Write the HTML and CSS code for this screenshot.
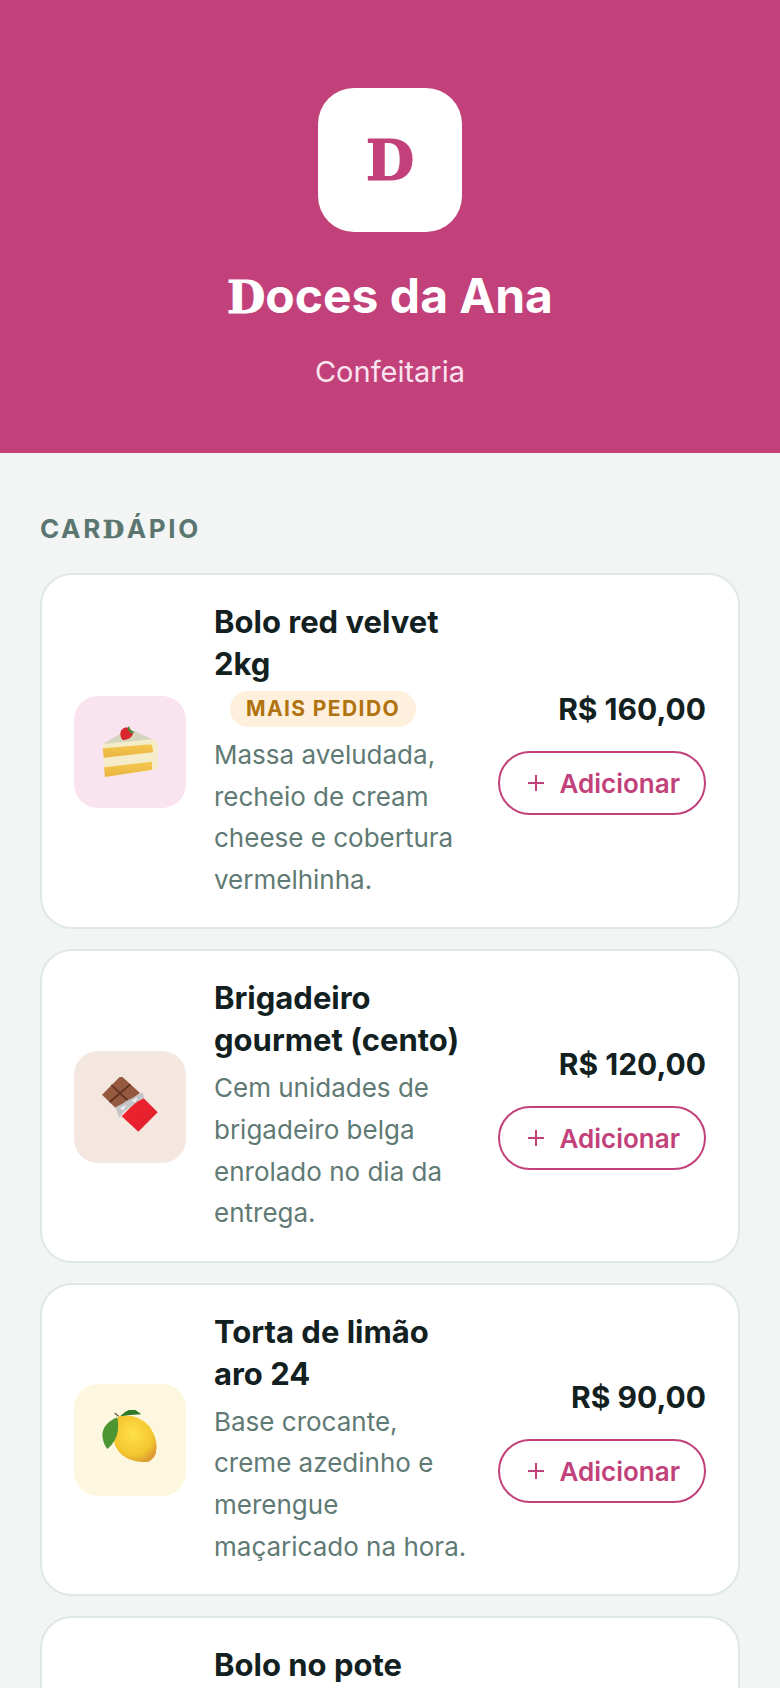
FILE: index.html
```html
<!DOCTYPE html>
<html lang="pt-BR">
<head>
    <meta charset="UTF-8">
    <meta name="viewport" content="width=device-width, initial-scale=1.0">
    <title>Doces da Ana</title>
    <link rel="stylesheet" href="styles.css">
</head>
<body>
    <div class="page">
        <header class="hero">
            <div class="logo"><span class="slab">D</span></div>
            <h1><span class="slab">D</span>oces da Ana</h1>
            <p class="kind">Confeitaria</p>
        </header>

        <main class="menu">
            <h2>CAR<span class="slab">D</span>ÁPIO</h2>

            <article class="card">
                <div class="thumb thumb-pink">
                    <svg class="emoji" viewBox="120 111 180 180" aria-hidden="true">
                        <defs>
                            <linearGradient id="sponge" x1="0" y1="0" x2="0" y2="1">
                                <stop offset="0" stop-color="#f5c850"/>
                                <stop offset="1" stop-color="#e9b440"/>
                            </linearGradient>
                        </defs>
                        <path d="M128 177 L190 141 L222 137 L282 165 L200 185 Z" fill="#d6d5bd"/>
                        <path d="M128 177 L280 163 Q294 170 294 192 L294 246 Q293 252 285 254 L135 277 Z" fill="#f5ecc9"/>
                        <path d="M128 190 L274 178 Q280 190 279 202 L131 218 Z" fill="url(#sponge)"/>
                        <path d="M132 247 L276 230 L276 254 L135 276 Z" fill="url(#sponge)"/>
                        <path d="M198 127 Q216 132 219 148 Q210 166 188 165 Q176 152 184 136 Q190 128 198 127 Z" fill="#d8262f"/>
                        <path d="M202 128 L207 124 L212 134 L224 142 L213 146 Q205 138 202 128 Z" fill="#4f8a3c"/>
                    </svg>
                </div>
                <div class="info">
                    <h3>Bolo red velvet 2kg</h3>
                    <span class="badge">MAIS PEDIDO</span>
                    <p>Massa aveludada, recheio de cream cheese e cobertura vermelhinha.</p>
                </div>
                <div class="buy">
                    <div class="price">R$ 160,00</div>
                    <button class="add">
                        <svg class="plus" viewBox="0 0 20 20" aria-hidden="true"><path d="M10 2v16M2 10h16"/></svg>
                        Adicionar
                    </button>
                </div>
            </article>

            <article class="card">
                <div class="thumb thumb-brown">
                    <svg class="emoji" viewBox="120 114 180 180" aria-hidden="true">
                        <defs>
                            <linearGradient id="wrap" x1="0" y1="0" x2="1" y2="1">
                                <stop offset="0" stop-color="#f5232f"/>
                                <stop offset="1" stop-color="#dd1f2c"/>
                            </linearGradient>
                        </defs>
                        <path d="M183 110 L240 162 L172 212 L126 167 Z" fill="#95593f"/>
                        <path d="M154 138 L206 187 M211 136 L149 189" stroke="#5f2f1e" stroke-width="5" fill="none"/>
                        <path d="M185 232 L245 172 L293 220 L235 278 Z" fill="url(#wrap)"/>
                        <path d="M166 205 L186 195 L200 185 L222 175 L248 160 L252 178 L232 188 L212 203 L192 218 L178 236 Z" fill="#c3c5c8"/>
                        <path d="M180 208 L198 197 L190 214 Z M214 186 L234 174 L226 190 Z" fill="#eef0f2"/>
                    </svg>
                </div>
                <div class="info">
                    <h3>Brigadeiro gourmet (cento)</h3>
                    <p>Cem unidades de brigadeiro belga enrolado no dia da entrega.</p>
                </div>
                <div class="buy">
                    <div class="price">R$ 120,00</div>
                    <button class="add">
                        <svg class="plus" viewBox="0 0 20 20" aria-hidden="true"><path d="M10 2v16M2 10h16"/></svg>
                        Adicionar
                    </button>
                </div>
            </article>

            <article class="card">
                <div class="thumb thumb-yellow">
                    <svg class="emoji" viewBox="120 111 180 180" aria-hidden="true">
                        <defs>
                            <radialGradient id="lemon" cx="45%" cy="40%" r="65%">
                                <stop offset="0" stop-color="#ffe04a"/>
                                <stop offset="0.7" stop-color="#f3c62e"/>
                                <stop offset="1" stop-color="#dc9c30"/>
                            </radialGradient>
                        </defs>
                        <path d="M176 130 Q230 118 268 160 Q296 200 288 240 Q282 258 266 266 Q220 272 186 246 Q160 222 160 190 Q162 150 176 130 Z" fill="url(#lemon)"/>
                        <path d="M172 133 Q130 150 127 185 Q128 210 142 228 Q170 205 174 170 Q175 150 172 133 Z" fill="#4d9432"/>
                        <path d="M180 130 Q205 104 225 110 L244 124 Q210 125 180 130 Z" fill="#2f7a2a"/>
                        <path d="M164 120 L176 130" stroke="#6b5a48" stroke-width="4"/>
                    </svg>
                </div>
                <div class="info">
                    <h3>Torta de limão aro 24</h3>
                    <p>Base crocante, creme azedinho e merengue maçaricado na hora.</p>
                </div>
                <div class="buy">
                    <div class="price">R$ 90,00</div>
                    <button class="add">
                        <svg class="plus" viewBox="0 0 20 20" aria-hidden="true"><path d="M10 2v16M2 10h16"/></svg>
                        Adicionar
                    </button>
                </div>
            </article>

            <article class="card">
                <div class="thumb thumb-pink"></div>
                <div class="info">
                    <h3>Bolo no pote individual</h3>
                    <p>Camadas de massa fofinha e creme, prontas para levar.</p>
                </div>
                <div class="buy">
                    <div class="price">R$ 18,00</div>
                    <button class="add">
                        <svg class="plus" viewBox="0 0 20 20" aria-hidden="true"><path d="M10 2v16M2 10h16"/></svg>
                        Adicionar
                    </button>
                </div>
            </article>
        </main>
    </div>
</body>
</html>
```

FILE: styles.css
```css
* {
    margin: 0;
    padding: 0;
    box-sizing: border-box;
}

body {
    font-family: Inter, "Noto Sans", sans-serif;
    background-color: #f2f5f4;
    color: #12211f;
}

.page {
    height: 100vh;
    overflow: hidden;
}

.slab {
    font-family: "DejaVu Serif", "Liberation Serif", serif;
    -webkit-text-stroke: 0.02em currentColor;
}

.hero {
    height: 453px;
    padding-top: 88px;
    background-color: #c2417a;
    color: white;
    text-align: center;
}

.logo {
    width: 144px;
    height: 144px;
    margin: 0 auto 36px;
    display: flex;
    align-items: center;
    justify-content: center;
    background-color: white;
    border-radius: 36px;
    color: #c2417a;
    font-size: 56px;
    font-weight: 700;
}

.hero h1 {
    font-size: 48px;
    font-weight: 700;
    line-height: 56px;
}

.hero h1 .slab {
    font-size: 0.92em;
}

.kind {
    margin-top: 28px;
    font-size: 29px;
    line-height: 36px;
    color: #f9e3ee;
}

.menu {
    padding: 58px 40px;
}

.menu h2 {
    margin-bottom: 25px;
    font-size: 26px;
    line-height: 36px;
    font-weight: 700;
    letter-spacing: 2.6px;
    color: #5b7670;
}

.menu h2 .slab {
    font-size: 0.95em;
}

.card {
    display: flex;
    align-items: center;
    gap: 28px;
    margin-bottom: 20px;
    padding: 26px 32px 27px;
    background-color: white;
    border: 2px solid #dfe8e5;
    border-radius: 32px;
}

.thumb {
    flex: none;
    width: 112px;
    height: 112px;
    margin-top: 2px;
    display: flex;
    align-items: center;
    justify-content: center;
    border-radius: 24px;
}

.thumb-pink {
    background-color: #f9e3ee;
}

.thumb-brown {
    background-color: #f4e7df;
}

.thumb-yellow {
    background-color: #fef7df;
}

.emoji {
    width: 60px;
    height: 60px;
}

.info {
    flex: 1;
    min-width: 0;
}

.info h3 {
    margin-bottom: 6px;
    font-size: 31px;
    line-height: 42px;
    font-weight: 700;
}

.info p {
    font-size: 26px;
    line-height: 41.6px;
    color: #5f7a74;
}

.badge {
    display: block;
    width: fit-content;
    height: 36px;
    margin: 0 0 7px 16px;
    padding: 0 16px;
    line-height: 36px;
    background-color: #fef0dd;
    border-radius: 18px;
    font-size: 21px;
    font-weight: 700;
    letter-spacing: 1.4px;
    color: #b0730f;
}

.buy {
    flex: none;
    display: flex;
    flex-direction: column;
    align-items: flex-end;
    gap: 21px;
    margin-top: 2px;
}

.price {
    font-size: 30px;
    line-height: 42px;
    font-weight: 700;
    white-space: nowrap;
}

.add {
    display: flex;
    align-items: center;
    gap: 14px;
    height: 64px;
    padding: 0 24px 0 26px;
    background-color: white;
    border: 2px solid #c2417a;
    border-radius: 32px;
    color: #c2417a;
    font-family: inherit;
    font-size: 26px;
    font-weight: 600;
}

.plus {
    width: 20px;
    height: 20px;
    fill: none;
    stroke: #c2417a;
    stroke-width: 2;
}
```
